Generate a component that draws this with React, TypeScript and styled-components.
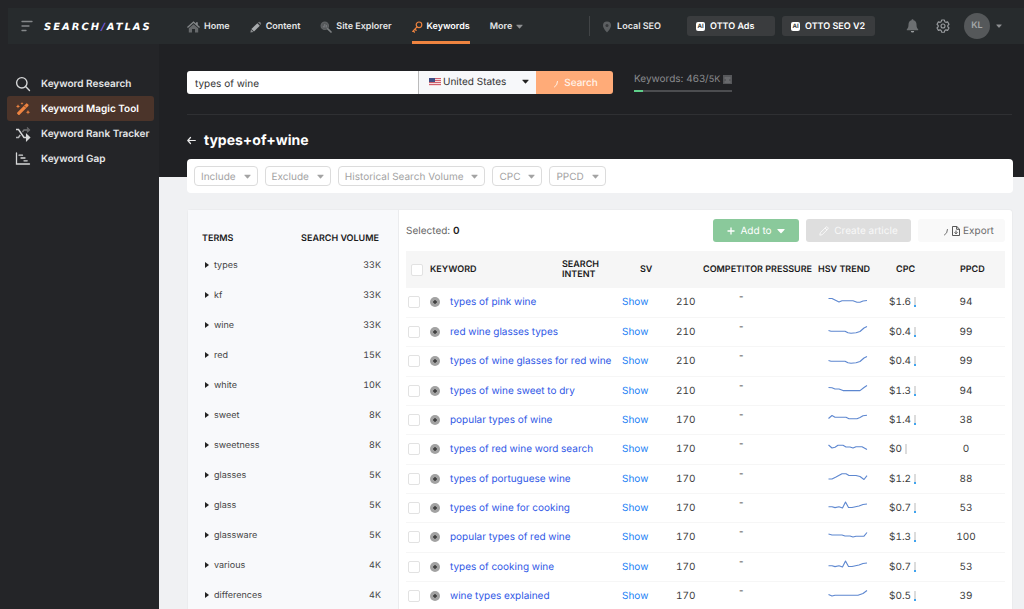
import React from 'react';
import styled, { createGlobalStyle, css } from 'styled-components';

const GlobalStyle = createGlobalStyle`
  *, *::before, *::after { box-sizing: border-box; }
  html, body { margin: 0; background: #f0f1f3; }
  body { text-rendering: geometricPrecision; }
  body, button, input, select, table {
    font-family: Inter, "Liberation Sans", sans-serif;
    font-size: 10px;
  }
  button { cursor: pointer; }
  button, input, select { margin: 0; text-rendering: inherit; }
  a { text-decoration: none; }
`;

const Shell = styled.div`
  display: flex;
  flex-direction: column;
  height: 100vh;
  overflow: hidden;
  background: #242528;
`;

/* ---------- header ---------- */

const Header = styled.header`
  display: flex;
  align-items: center;
  flex: none;
  height: 36px;
  margin: 8px 0 0 8px;
  padding: 0 22px 0 13px;
  background: #272b2d;
`;

const PlainButton = styled.button`
  display: flex;
  align-items: center;
  padding: 0;
  border: 0;
  background: none;
  color: inherit;
`;

const Logo = styled.a`
  width: 126px;
  margin-left: 11px;
  padding-top: 4px;
  color: #fff;
  font: italic bold 10px/12px "DejaVu Sans", sans-serif;
  letter-spacing: 2px;
  white-space: nowrap;
`;

const LogoSlash = styled.span`
  color: #7a5be0;
`;

const Nav = styled.nav`
  display: flex;
  align-items: stretch;
  align-self: stretch;
  gap: 20px;
  margin-left: 17px;
`;

const NavLink = styled.a<{ $active?: boolean }>`
  display: flex;
  align-items: center;
  gap: 4px;
  padding-top: 4px;
  border-bottom: 3px solid ${(p) => (p.$active ? '#ef8440' : 'transparent')};
  color: ${(p) => (p.$active ? '#fff' : '#e4e5e6')};
  font-size: 9px;
  font-weight: 600;
  white-space: nowrap;
`;

const HeaderRight = styled.div`
  display: flex;
  align-items: center;
  margin-left: auto;
  color: #8e9092;
`;

const LocalLink = styled.a`
  display: flex;
  align-items: center;
  gap: 5px;
  height: 20px;
  margin-right: 26px;
  padding: 1px 0 0 12px;
  border-left: 1px solid #414446;
  color: #e4e5e6;
  font-size: 9px;
  font-weight: 600;
  white-space: nowrap;
`;

const OttoButton = styled.button<{ $width: number }>`
  display: flex;
  align-items: center;
  gap: 5px;
  width: ${(p) => p.$width}px;
  height: 20px;
  margin-right: 7px;
  padding: 0 9px;
  border: 0;
  border-radius: 3px;
  background: #3a3c3e;
  color: #fff;
  font-size: 9px;
  font-weight: 600;
  white-space: nowrap;
`;

const AiBadge = styled.span`
  flex: none;
  width: 9px;
  height: 9px;
  border-radius: 2px;
  background: #fff;
  color: #3a3c3e;
  font-size: 6px;
  font-weight: 700;
  line-height: 9px;
  text-align: center;
`;

const IconGroup = styled.div`
  display: flex;
  align-items: center;
  gap: 17px;
  margin-left: 24px;
`;

const Account = styled(PlainButton)`
  gap: 6px;
  margin-left: -3px;
`;

const Avatar = styled.span`
  width: 26px;
  height: 26px;
  border-radius: 50%;
  background: #55585a;
  color: #a5a8aa;
  font-size: 9px;
  font-weight: 600;
  line-height: 26px;
  text-align: center;
`;

/* ---------- sidebar ---------- */

const Body = styled.div`
  display: grid;
  grid-template-columns: 159px minmax(0, 1fr);
  flex: 1;
  min-height: 0;
`;

const Sidebar = styled.nav`
  padding: 27px 5px 0 7px;
`;

const SideLink = styled.a<{ $active?: boolean }>`
  display: flex;
  align-items: center;
  gap: 10px;
  height: 25px;
  padding-left: 8px;
  border-radius: 3px;
  background: ${(p) => (p.$active ? '#4b342a' : 'transparent')};
  color: ${(p) => (p.$active ? '#fff' : '#e6e7e8')};
  font-size: 10px;
  font-weight: 600;
  white-space: nowrap;
  svg { flex: none; color: ${(p) => (p.$active ? '#ef8440' : '#d6d7d8')}; }
`;

/* ---------- main ---------- */

const Main = styled.main`
  display: flex;
  flex-direction: column;
  min-width: 0;
  background: #f0f1f3;
`;

const Hero = styled.section`
  flex: none;
  padding: 27px 12px 27px 28px;
  background: #202124;
`;

const SearchRow = styled.div`
  display: flex;
  align-items: flex-start;
  padding-bottom: 20px;
  border-bottom: 1px solid #2f3033;
`;

const SearchForm = styled.form`
  display: flex;
  width: 426px;
  height: 23px;
  border-radius: 3px;
  overflow: hidden;
`;

const SearchInput = styled.input`
  flex: 1;
  min-width: 0;
  padding: 2px 8px 0;
  border: 0;
  background: #fff;
  color: #333;
`;

const CountryField = styled.div`
  display: flex;
  align-items: center;
  gap: 2px;
  width: 118px;
  padding: 0 7px 2px 10px;
  border-left: 1px solid #bbb;
  background: #f7f8fa;
`;

const CountrySelect = styled.select`
  flex: 1;
  min-width: 0;
  padding: 0;
  border: 0;
  appearance: none;
  background: none;
  color: #333;
`;

const SearchButton = styled.button`
  display: flex;
  align-items: center;
  justify-content: center;
  gap: 5px;
  width: 77px;
  padding: 0;
  border: 0;
  background: #ffab78;
  color: #fff3ea;
  font-weight: 500;
`;

const Quota = styled.div`
  width: 98px;
  margin-left: 21px;
  padding-top: 1px;
  color: #8b8c8f;
  line-height: 14px;
  white-space: nowrap;
`;

const QuotaLabel = styled.div`
  display: flex;
  align-items: center;
  justify-content: space-between;
  height: 14px;
`;

const Small = styled.span`
  font-size: 9px;
`;

const QuotaTrack = styled.div`
  height: 2px;
  margin-top: 4px;
  background: #4c4d50;
`;

const QuotaFill = styled.div`
  height: 2px;
  background: #5fd08a;
`;

const TitleRow = styled.div`
  display: flex;
  align-items: center;
  gap: 8px;
  height: 20px;
  margin-top: 15px;
  color: #fff;
`;

const Title = styled.h1`
  margin: 0;
  font-size: 14px;
  font-weight: 700;
`;

const Content = styled.div`
  display: flex;
  flex-direction: column;
  flex: 1;
  gap: 16px;
  min-height: 0;
  margin-top: -18px;
  padding: 0 11px 0 28px;
`;

const FilterBar = styled.div`
  display: flex;
  flex: none;
  align-items: center;
  gap: 7px;
  height: 34px;
  padding: 0 7px;
  border-radius: 4px;
  background: #fff;
`;

const FilterButton = styled.button`
  display: flex;
  align-items: center;
  gap: 8px;
  height: 20px;
  padding: 1px 6px 0;
  border: 1px solid #dcdcdc;
  border-radius: 4px;
  background: #fff;
  color: #a3a3a3;
  white-space: nowrap;
`;

const Panel = styled.section`
  display: grid;
  grid-template-columns: 211px minmax(0, 1fr);
  flex: 1 0 auto;
  border: 1px solid #ebecee;
  border-bottom: 0;
  border-radius: 4px 4px 0 0;
  background: #fff;
`;

const TermsPane = styled.div`
  padding: 17px 17px 0 14px;
  border-right: 1px solid #ebecee;
  background: #f8f9fb;
`;

const TermsTable = styled.table`
  width: 100%;
  border-collapse: collapse;
  color: #444;
  font-size: 9px;
  th {
    height: 23px;
    padding: 0 2px 0 0;
    color: #1b1b1b;
    font-weight: 600;
    text-align: left;
  }
  th:last-child, td:last-child { text-align: right; }
  td { height: 30px; padding: 0; font-variant-numeric: tabular-nums; }
`;

const TermButton = styled(PlainButton)`
  gap: 5px;
  padding-left: 3px;
  font-size: 9px;
`;

const ResultsPane = styled.div`
  min-width: 0;
  padding: 9px 7px 0 7px;
`;

const Toolbar = styled.div`
  display: flex;
  align-items: center;
  gap: 7px;
  height: 23px;
`;

const Selected = styled.span`
  margin-right: auto;
  color: #666;
  strong { color: #1b1b1b; font-weight: 600; }
`;

const tones = {
  green: css`background: #8ac99b; color: #fff;`,
  grey: css`background: #dedede; color: #f8f8f8;`,
  light: css`background: #f9f9f9; color: #6b6b6b;`,
};

const ToolButton = styled.button<{ $tone: keyof typeof tones; $width: number }>`
  display: flex;
  align-items: center;
  justify-content: center;
  gap: 5px;
  width: ${(p) => p.$width}px;
  height: 23px;
  padding: 0;
  border: 0;
  border-radius: 3px;
  ${(p) => tones[p.$tone]}
`;

const ExportLabel = styled.span`
  display: flex;
  align-items: center;
  gap: 3px;
  padding-left: 12px;
`;

const ResultsTable = styled.table`
  width: 100%;
  margin-top: 9px;
  border-collapse: collapse;
  table-layout: fixed;
  color: #3d3d3d;
  th {
    height: 37px;
    padding: 0;
    background: #f6f6f6;
    color: #1b1b1b;
    font-size: 9px;
    line-height: 10px;
    font-weight: 600;
    text-align: left;
    white-space: nowrap;
  }
  td {
    height: 29px;
    padding: 0;
    white-space: nowrap;
    font-variant-numeric: tabular-nums;
  }
  tbody tr { border-bottom: 1px solid #f6f6f6; }
  tbody tr:nth-child(3n) td { height: 30px; }
`;

const Th = styled.th<{ $indent?: number }>`
  && { padding-left: ${(p) => p.$indent ?? 0}px; }
`;

const Td = styled.td<{ $indent?: number; $align?: string }>`
  && {
    padding-left: ${(p) => p.$indent ?? 0}px;
    text-align: ${(p) => p.$align ?? 'left'};
  }
`;

const Score = styled.span`
  padding-right: 6px;
`;

const Tick = styled.input`
  display: block;
  appearance: none;
  width: 12px;
  height: 12px;
  border: 1px solid #e2e2e2;
  border-radius: 2px;
  background: #fff;
`;

const KeywordLink = styled.a`
  color: #3058e6;
`;

const ShowButton = styled(PlainButton)`
  color: #2080f5;
`;

const Dash = styled.span`
  display: block;
  padding-bottom: 10px;
  line-height: 12px;
`;

const CpcCell = styled.span`
  display: flex;
  align-items: center;
  gap: 3px;
`;

const Meter = styled.span<{ $fill: number }>`
  width: 2px;
  height: 10px;
  background: linear-gradient(to top, #3fa3ee ${(p) => p.$fill}px, #dcdcdc ${(p) => p.$fill}px);
`;

/* ---------- drawings ---------- */

const Caret = ({ size = 7, color = 'currentColor' }: { size?: number; color?: string }) => (
  <svg width={size} height={size} viewBox="0 0 8 8" fill={color} aria-hidden="true">
    <path d="M0.8 2h6.4q.8 0 .3.7L4.500 6q-.5.5-1 0L.5 2.700Q0 2 .8 2z" />
  </svg>
);

const MenuIcon = () => (
  <svg width="12" height="12" viewBox="0 0 12 12" stroke="#85888a" strokeWidth="1.3" strokeLinecap="round" aria-hidden="true">
    <path d="M1 1.5h10M1 6h7M1 10.5h4" />
  </svg>
);

const HomeIcon = () => (
  <svg width="13" height="12" viewBox="0 0 13 12" aria-hidden="true">
    <path d="M6.500 3.200 11.200 7.300V11.500H8V8H5v3.500H1.800V7.300z" fill="#66696b" />
    <path d="M6.500.3 9 2.500V1.200h1.800V4L13 6l-.9 1L6.500 2.100.9 7 0 6z" fill="#85888a" />
  </svg>
);

const PencilIcon = () => (
  <svg width="12" height="12" viewBox="0 0 12 12" aria-hidden="true">
    <path d="M7.300 2.200 9.800 4.700 4 10.500 1.400 8z" fill="#a8abad" />
    <path d="M8 1.500Q9.200.300 10.600 1.400 11.800 2.700 10.500 4z" fill="#77797b" />
    <path d="M1 8.500 3.500 11 .4 11.600z" fill="#8a8d8f" />
  </svg>
);

const ExplorerIcon = () => (
  <svg width="12" height="12" viewBox="0 0 12 12" fill="none" aria-hidden="true">
    <circle cx="4.800" cy="4.800" r="3.700" fill="#55585a" stroke="#5f6264" strokeWidth="1.200" />
    <path d="M3.300 6.500V4.800M4.800 6.500V3M6.300 6.500V4" stroke="#85888a" strokeWidth=".8" />
    <path d="M7.800 7.800 11 11" stroke="#7d8082" strokeWidth="1.700" strokeLinecap="round" />
  </svg>
);

const KeyIcon = () => (
  <svg width="11" height="12" viewBox="0 0 11 12" fill="none" stroke="#ef8440" strokeLinecap="round" aria-hidden="true">
    <circle cx="7" cy="3.800" r="2.800" strokeWidth="1.200" />
    <path d="M5 5.900.8 10.400M1.200 10l1.200 1M2.900 8.200l1.200 1.100" strokeWidth="1.300" />
  </svg>
);

const PinIcon = () => (
  <svg width="10" height="12" viewBox="0 0 10 12" aria-hidden="true">
    <path d="M5 .5a4 4 0 0 1 4 4C9 7.500 5 11.500 5 11.500S1 7.500 1 4.500a4 4 0 0 1 4-4z" fill="#5c5f61" />
    <circle cx="5" cy="4.500" r="1.500" fill="#36393b" />
  </svg>
);

const BellIcon = () => (
  <svg width="13" height="14" viewBox="0 0 13 14" fill="#6c6f71" aria-hidden="true">
    <path d="M6.500.3c.6 0 1 .4 1 1 2 .5 3 2.200 3 4.200 0 2.500.6 3.600 1.700 4.800v.9H.8v-.9C1.900 9.100 2.500 8 2.500 5.500c0-2 1-3.700 3-4.200 0-.6.4-1 1-1z" />
    <path d="M4.800 11.900h3.400a1.700 1.700 0 0 1-3.400 0z" fill="#9a9d9f" />
  </svg>
);

const GearIcon = () => (
  <svg width="14" height="14" viewBox="0 0 24 24" fill="none" stroke="#9a9da0" strokeWidth="1.900" aria-hidden="true">
    <circle cx="12" cy="12" r="3.400" />
    <path strokeLinejoin="round" d="M9.600 1.800h4.800l.7 2.900 1.900 1.100 2.900-.9 2.400 4.200-2.100 2v2.200l2.100 2-2.400 4.200-2.900-.9-1.900 1.100-.7 2.900H9.600l-.7-2.900L7 18.600l-2.900.9-2.400-4.200 2.100-2v-2.200l-2.100-2 2.400-4.200 2.900.9 1.900-1.100z" />
  </svg>
);

const MagnifierIcon = () => (
  <svg width="16" height="16" viewBox="0 0 16 16" fill="none" stroke="currentColor" strokeWidth="1.400" strokeLinecap="round" aria-hidden="true">
    <circle cx="6.800" cy="6.800" r="5.200" />
    <path d="M10.600 10.600 14.500 14.500" />
  </svg>
);

const WandIcon = () => (
  <svg width="16" height="16" viewBox="0 0 16 16" fill="currentColor" aria-hidden="true">
    <path d="M11 2.700q.7-.7 1.400 0l.9.9q.7.700 0 1.400l-8.700 8.700q-.7.700-1.400 0l-.9-.9q-.7-.7 0-1.400z" />
    <path d="M9.600 5.200l1.300 1.300" stroke="#4b342a" strokeWidth=".9" />
    <path d="M3 3.200l.6 1.500 1.500.6-1.500.6L3 7.400l-.6-1.500-1.500-.6 1.500-.6zM7 1l.4 1.100 1.100.4-1.100.4L7 4l-.4-1.100-1.100-.4 1.100-.4zM13 9l.6 1.600 1.600.6-1.600.6L13 13.400l-.6-1.600-1.600-.6 1.600-.6z" />
  </svg>
);

const ShuffleIcon = () => (
  <svg width="16" height="16" viewBox="0 0 16 16" fill="none" stroke="currentColor" strokeWidth="1.500" aria-hidden="true">
    <path d="M1 3.500h2.500l5.500 8h4" />
    <path d="M1 11.500h2.500L5.200 9" opacity=".8" />
    <path d="M7.400 6 9 4h4" opacity=".45" />
    <path d="M11.700 8.800l2.800 2.700-2.800 2.700z" fill="currentColor" />
    <path d="M12 1.500 14.500 4 12 6.300" strokeWidth="1.200" opacity=".4" />
  </svg>
);

const GapIcon = () => (
  <svg width="16" height="16" viewBox="0 0 16 16" fill="none" stroke="currentColor" strokeWidth="1.300" strokeLinecap="round" aria-hidden="true">
    <path d="M1.500 2v11h13M4 4.200h3.500M6 7h4M9 9.800h3.200" />
  </svg>
);

const FlagIcon = () => (
  <svg width="12" height="8" viewBox="0 0 12 8" aria-hidden="true">
    <path fill="#f4dcdf" d="M0 0h12v8H0z" />
    <path stroke="#d0606e" strokeWidth="1" d="M0 .5h12M0 2.500h12M0 4.500h12M0 6.500h12" />
    <path fill="#414f86" d="M0 0h6v4H0z" />
  </svg>
);

const SpinnerIcon = () => (
  <svg width="8" height="10" viewBox="0 0 8 10" fill="none" stroke="currentColor" strokeLinecap="round" aria-hidden="true">
    <path d="M6.500 3.500Q6.500 7.500 3.500 9" />
  </svg>
);

const InfoIcon = () => (
  <svg width="9" height="9" viewBox="0 0 9 9" aria-hidden="true">
    <path fill="#56575a" d="M0 0h9v9H0z" />
    <path d="M1.500 3h6M3 5h3M1.500 7h6" stroke="#7b7c7f" />
  </svg>
);

const BackIcon = () => (
  <svg width="9" height="9" viewBox="0 0 9 9" fill="none" stroke="#e8e8e8" strokeWidth="1.200" strokeLinecap="round" strokeLinejoin="round" aria-hidden="true">
    <path d="M8.300 4.500H.8M3.500 1.500.8 4.500l2.700 3" />
  </svg>
);

const TriangleIcon = () => (
  <svg width="4" height="6" viewBox="0 0 4 6" fill="#222" aria-hidden="true">
    <path d="M0 0 4 3 0 6z" />
  </svg>
);

const PlusIcon = () => (
  <svg width="8" height="8" viewBox="0 0 8 8" stroke="currentColor" strokeWidth="1.300" aria-hidden="true">
    <path d="M4 .5v7M.5 4h7" />
  </svg>
);

const EditIcon = () => (
  <svg width="10" height="10" viewBox="0 0 10 10" fill="none" stroke="currentColor" strokeLinejoin="round" aria-hidden="true">
    <path d="M.8 9.200l.5-2.400L7 1.100q.7-.6 1.400 0l.5.5q.6.700 0 1.400L3.200 8.700zM6 2l2 2" />
  </svg>
);

const FileIcon = () => (
  <svg width="8" height="10" viewBox="0 0 8 10" fill="none" stroke="#444" aria-hidden="true">
    <path d="M.5.5h4.300l2.700 2.600v6.400h-7zM4.600.5v2.800h2.900M4 4.500v3.200M2.500 6.300 4 7.800l1.500-1.500" strokeWidth=".9" />
  </svg>
);

const ExpandIcon = () => (
  <svg width="10" height="10" viewBox="0 0 10 10" aria-hidden="true">
    <circle cx="5" cy="5" r="5" fill="#a2a2a2" />
    <path d="M5 3v4M3 5h4" stroke="#3a3a3a" strokeWidth="1.400" />
  </svg>
);

const Trend = ({ path }: { path: string }) => (
  <svg width="40" height="12" viewBox="0 0 40 12" fill="none" stroke="#5d87d0" strokeWidth="1.100" strokeLinejoin="round" aria-hidden="true">
    <path d={path} />
  </svg>
);

/* ---------- data ---------- */

const filters = ['Include', 'Exclude', 'Historical Search Volume', 'CPC', 'PPCD'];

const terms: [string, string][] = [
  ['types', '33K'], ['kf', '33K'], ['wine', '33K'], ['red', '15K'], ['white', '10K'], ['sweet', '8K'],
  ['sweetness', '8K'], ['glasses', '5K'], ['glass', '5K'], ['glassware', '5K'], ['various', '4K'], ['differences', '4K'],
];

const dip = 'M0.500 6.500 3 7.200H17L20 8.800 23 9.200 28 8.800 32 7.500 36 4 39 2.500';
const spike = 'M.5 6.800H4L7 7.600 11 6.800 14.500 8 17.500 2 20.500 7.500H24L31 6 35 4.500 39 4';

const rows: { kw: string; sv: number; cpc: string; fill: number; ppcd: number; trend: string }[] = [
  { kw: 'types of pink wine', sv: 210, cpc: '$1.6', fill: 2, ppcd: 94, trend: 'M.5 3.500H4L7 5 11 7 14 5.800H25L29 7.200H32L35 6 39 5.500' },
  { kw: 'red wine glasses types', sv: 210, cpc: '$0.4', fill: 2, ppcd: 99, trend: dip },
  { kw: 'types of wine glasses for red wine', sv: 210, cpc: '$0.4', fill: 2, ppcd: 99, trend: dip },
  { kw: 'types of wine sweet to dry', sv: 210, cpc: '$1.3', fill: 2, ppcd: 94, trend: 'M.5 4.500 4 4.800 7 6H11L15 7.600H32L36 4.500 39 2.500' },
  { kw: 'popular types of wine', sv: 170, cpc: '$1.4', fill: 2, ppcd: 38, trend: 'M.5 6.500 4 3.500 7 5.200H18L21 6.700H29L32 5.500 35 3.800 39 3.200' },
  { kw: 'types of red wine word search', sv: 170, cpc: '$0', fill: 0, ppcd: 0, trend: 'M.5 3 4 6 7 5.200 10 3.300H15L18 5H22L25 6 28 4.700H34L39 7.500' },
  { kw: 'types of portuguese wine', sv: 170, cpc: '$1.2', fill: 2, ppcd: 88, trend: 'M.5 8H4L8 6 14 2.700H18L21 4.500H28L32 5.500 36 8.500 39 4.700' },
  { kw: 'types of wine for cooking', sv: 170, cpc: '$0.7', fill: 2, ppcd: 53, trend: spike },
  { kw: 'popular types of red wine', sv: 170, cpc: '$1.3', fill: 2, ppcd: 100, trend: 'M.5 4 4 5H14L17 6H22L25 7 28 6.200H36L39 2.500' },
  { kw: 'types of cooking wine', sv: 170, cpc: '$0.7', fill: 2, ppcd: 53, trend: spike },
  { kw: 'wine types explained', sv: 170, cpc: '$0.5', fill: 2, ppcd: 39, trend: 'M.5 6.500 4 8 7 7.200H30L35 5.500 39 2.500' },
];

export default function App() {
  return (
    <Shell>
      <GlobalStyle />
      <Header>
        <PlainButton aria-label="Menu"><MenuIcon /></PlainButton>
        <Logo href="#">SEARCH<LogoSlash>/</LogoSlash>ATLAS</Logo>
        <Nav aria-label="Products">
          <NavLink href="#"><HomeIcon />Home</NavLink>
          <NavLink href="#"><PencilIcon />Content</NavLink>
          <NavLink href="#"><ExplorerIcon />Site Explorer</NavLink>
          <NavLink href="#" $active><KeyIcon />Keywords</NavLink>
          <NavLink href="#">More <Caret color="#8e9092" /></NavLink>
        </Nav>
        <HeaderRight>
          <LocalLink href="#"><PinIcon />Local SEO</LocalLink>
          <OttoButton $width={88}><AiBadge>AI</AiBadge>OTTO Ads</OttoButton>
          <OttoButton $width={93}><AiBadge>AI</AiBadge>OTTO SEO V2</OttoButton>
          <IconGroup>
            <PlainButton aria-label="Notifications"><BellIcon /></PlainButton>
            <PlainButton aria-label="Settings"><GearIcon /></PlainButton>
            <Account aria-label="Account"><Avatar>KL</Avatar><Caret size={6} /></Account>
          </IconGroup>
        </HeaderRight>
      </Header>
      <Body>
        <Sidebar aria-label="Keyword tools">
          <SideLink href="#"><MagnifierIcon />Keyword Research</SideLink>
          <SideLink href="#" $active><WandIcon />Keyword Magic Tool</SideLink>
          <SideLink href="#"><ShuffleIcon />Keyword Rank Tracker</SideLink>
          <SideLink href="#"><GapIcon />Keyword Gap</SideLink>
        </Sidebar>
        <Main>
          <Hero>
            <SearchRow>
              <SearchForm onSubmit={(e) => e.preventDefault()}>
                <SearchInput aria-label="Keyword" defaultValue="types of wine" />
                <CountryField>
                  <FlagIcon />
                  <CountrySelect aria-label="Country"><option>United States</option></CountrySelect>
                  <Caret color="#222" />
                </CountryField>
                <SearchButton type="submit"><SpinnerIcon />Search</SearchButton>
              </SearchForm>
              <Quota>
                <QuotaLabel><span>Keywords: 463/<Small>5K</Small></span><InfoIcon /></QuotaLabel>
                <QuotaTrack><QuotaFill style={{ width: `${(463 / 5000) * 100}%` }} /></QuotaTrack>
              </Quota>
            </SearchRow>
            <TitleRow>
              <PlainButton aria-label="Back"><BackIcon /></PlainButton>
              <Title>types+of+wine</Title>
            </TitleRow>
          </Hero>
          <Content>
            <FilterBar>
              {filters.map((f) => (
                <FilterButton key={f}>{f}<Caret /></FilterButton>
              ))}
            </FilterBar>
            <Panel>
              <TermsPane>
                <TermsTable>
                  <thead><tr><th>TERMS</th><th>SEARCH VOLUME</th></tr></thead>
                  <tbody>
                    {terms.map(([name, volume]) => (
                      <tr key={name}>
                        <td><TermButton><TriangleIcon />{name}</TermButton></td>
                        <td>{volume}</td>
                      </tr>
                    ))}
                  </tbody>
                </TermsTable>
              </TermsPane>
              <ResultsPane>
                <Toolbar>
                  <Selected>Selected: <strong>0</strong></Selected>
                  <ToolButton $tone="green" $width={86}><PlusIcon />Add to<Caret size={8} /></ToolButton>
                  <ToolButton $tone="grey" $width={105}><EditIcon />Create article</ToolButton>
                  <ToolButton $tone="light" $width={87}>
                    <ExportLabel><SpinnerIcon /><FileIcon />Export</ExportLabel>
                  </ToolButton>
                </Toolbar>
                <ResultsTable>
                  <colgroup>
                    <col width="20" /><col width="20" /><col /><col width="56" /><col width="50" /><col width="35" />
                    <col width="115" /><col width="57" /><col width="62" /><col width="72" />
                  </colgroup>
                  <thead>
                    <tr>
                      <Th $indent={5}><Tick type="checkbox" aria-label="Select all" /></Th>
                      <Th colSpan={2} $indent={4}>KEYWORD</Th>
                      <Th $indent={4}>SEARCH<br />INTENT</Th>
                      <Th colSpan={2} $indent={26}>SV</Th>
                      <Th $indent={4}>COMPETITOR PRESSURE</Th>
                      <Th $indent={4}>HSV TREND</Th>
                      <Th $indent={25}>CPC</Th>
                      <Th $indent={27}>PPCD</Th>
                    </tr>
                  </thead>
                  <tbody>
                    {rows.map((r) => (
                      <tr key={r.kw}>
                        <Td $indent={2}><Tick type="checkbox" aria-label={`Select ${r.kw}`} /></Td>
                        <Td $indent={4}><PlainButton aria-label={`Add ${r.kw}`}><ExpandIcon /></PlainButton></Td>
                        <Td colSpan={2} $indent={4}><KeywordLink href="#">{r.kw}</KeywordLink></Td>
                        <Td $indent={8}><ShowButton>Show</ShowButton></Td>
                        <Td $indent={12}>{r.sv}</Td>
                        <Td $indent={39}><Dash>-</Dash></Td>
                        <Td $indent={14}><Trend path={r.trend} /></Td>
                        <Td $indent={18}><CpcCell>{r.cpc}<Meter $fill={r.fill} /></CpcCell></Td>
                        <Td $align="center"><Score>{r.ppcd}</Score></Td>
                      </tr>
                    ))}
                  </tbody>
                </ResultsTable>
              </ResultsPane>
            </Panel>
          </Content>
        </Main>
      </Body>
    </Shell>
  );
}
